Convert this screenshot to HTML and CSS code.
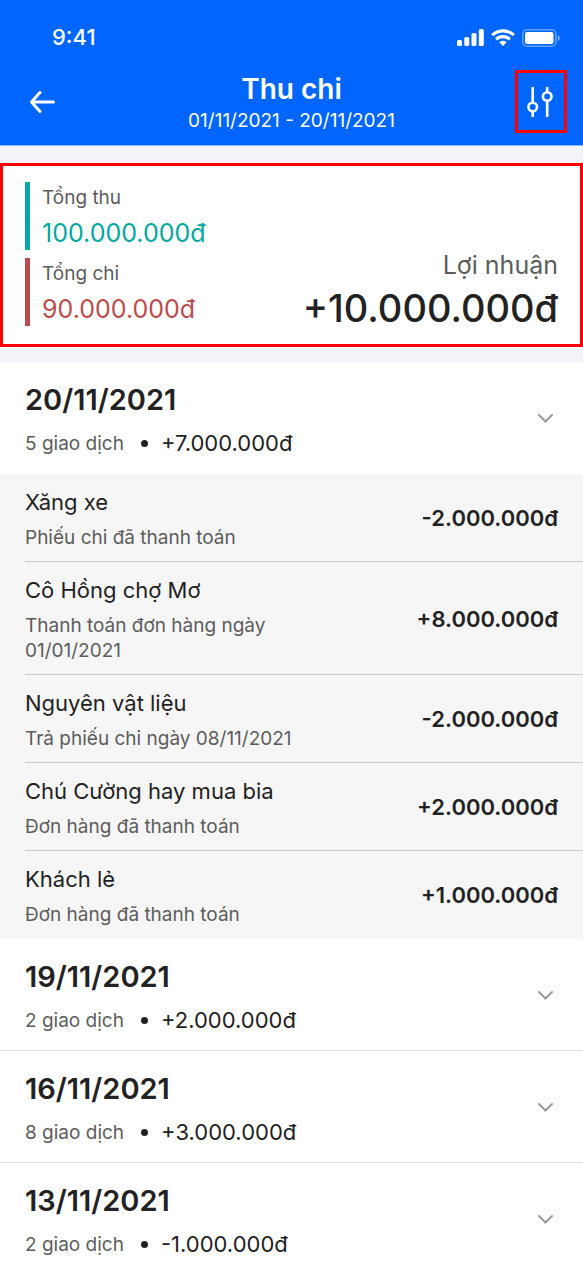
FILE: index.html
```html
<!DOCTYPE html>
<html lang="vi">
<head>
<meta charset="utf-8">
<meta name="viewport" content="width=device-width, initial-scale=1">
<title>Thu chi</title>
<link rel="stylesheet" href="styles.css">
</head>
<body>
<header class="header">
  <div class="status">
    <span class="clock">9:41</span>
    <div class="status-icons">
      <svg width="27" height="17" viewBox="0 0 27 17" fill="#fff" aria-hidden="true"><rect y="11" width="5" height="6" rx="1.5"/><rect x="7.300" y="8" width="5" height="9" rx="1.5"/><rect x="14.500" y="4" width="5" height="13" rx="1.5"/><rect x="21.800" y="0" width="5" height="17" rx="1.5"/></svg>
      <svg width="24" height="17" viewBox="0 0 24 17" aria-hidden="true"><g fill="none" stroke="#fff" stroke-width="3.200"><path d="M1.200 6.200a15.600 15.600 0 0 1 21.600 0"/><path d="M5.200 10.300a9.800 9.800 0 0 1 13.600 0"/></g><path fill="#fff" d="M12 17l-3.700-3.700a5.400 5.400 0 0 1 7.400 0z"/></svg>
      <svg width="38" height="18" viewBox="0 0 38 18" aria-hidden="true"><rect x=".8" y=".8" width="33" height="16.400" rx="4" fill="none" stroke="#fff" stroke-opacity=".4" stroke-width="1.500"/><rect x="3" y="3" width="28.500" height="12" rx="2.200" fill="#fff"/><path d="M35.800 6v6.200a3.400 3.400 0 0 0 0-6.200z" fill="#fff" fill-opacity=".5"/></svg>
    </div>
  </div>
  <div class="nav">
    <button class="icon-button" type="button" aria-label="Quay lại"><svg width="26" height="24" viewBox="0 0 26 24" fill="none" stroke="#fff" stroke-width="3" stroke-linecap="round" stroke-linejoin="round" aria-hidden="true"><path d="M24.500 12H3M11 2.500L2.500 12l8.500 9.500"/></svg></button>
    <div class="nav-title">
      <h1 class="title">Thu chi</h1>
      <p class="range">01/11/2021 - 20/11/2021</p>
    </div>
    <button class="icon-button filter" type="button" aria-label="Bộ lọc"><svg width="28" height="30" viewBox="0 0 28 30" fill="none" stroke="#fff" stroke-width="2.600" aria-hidden="true"><path d="M5.700 0v15.500M5.700 24.500V30M20.200 0v5M20.200 14v16"/><circle cx="5.700" cy="20" r="4.300"/><circle cx="20.200" cy="9.500" r="4.300"/></svg></button>
  </div>
</header>
<main>
  <section class="summary">
    <div class="totals">
      <div class="total income"><span class="label">Tổng thu</span><span class="value">100.000.000đ</span></div>
      <div class="total expense"><span class="label">Tổng chi</span><span class="value">90.000.000đ</span></div>
    </div>
    <div class="profit"><span class="profit-label">Lợi nhuận</span><span class="profit-value">+10.000.000đ</span></div>
  </section>
  <section class="days">
    <button class="day open" type="button" aria-expanded="true">
      <span class="day-text"><span class="date">20/11/2021</span><span class="meta"><span class="count">5 giao dịch</span><span class="dot"></span><span>+7.000.000đ</span></span></span>
      <svg class="chevron" width="17" height="10" viewBox="0 0 17 10" aria-hidden="true"><path d="M2 2l6.500 6.500L15 2"/></svg>
    </button>
    <ul class="items">
      <li class="item"><div class="item-text"><span class="name">Xăng xe</span><span class="note">Phiếu chi đã thanh toán</span></div><span class="amount">-2.000.000đ</span></li>
      <li class="item"><div class="item-text"><span class="name">Cô Hồng chợ Mơ</span><span class="note">Thanh toán đơn hàng ngày 01/01/2021</span></div><span class="amount">+8.000.000đ</span></li>
      <li class="item"><div class="item-text"><span class="name">Nguyên vật liệu</span><span class="note">Trả phiếu chi ngày 08/11/2021</span></div><span class="amount">-2.000.000đ</span></li>
      <li class="item"><div class="item-text"><span class="name">Chú Cường hay mua bia</span><span class="note">Đơn hàng đã thanh toán</span></div><span class="amount">+2.000.000đ</span></li>
      <li class="item"><div class="item-text"><span class="name">Khách lẻ</span><span class="note">Đơn hàng đã thanh toán</span></div><span class="amount">+1.000.000đ</span></li>
    </ul>
    <button class="day" type="button" aria-expanded="false">
      <span class="day-text"><span class="date">19/11/2021</span><span class="meta"><span class="count">2 giao dịch</span><span class="dot"></span><span>+2.000.000đ</span></span></span>
      <svg class="chevron" width="17" height="10" viewBox="0 0 17 10" aria-hidden="true"><path d="M2 2l6.500 6.500L15 2"/></svg>
    </button>
    <button class="day" type="button" aria-expanded="false">
      <span class="day-text"><span class="date">16/11/2021</span><span class="meta"><span class="count">8 giao dịch</span><span class="dot"></span><span>+3.000.000đ</span></span></span>
      <svg class="chevron" width="17" height="10" viewBox="0 0 17 10" aria-hidden="true"><path d="M2 2l6.500 6.500L15 2"/></svg>
    </button>
    <button class="day last" type="button" aria-expanded="false">
      <span class="day-text"><span class="date">13/11/2021</span><span class="meta"><span class="count">2 giao dịch</span><span class="dot"></span><span>-1.000.000đ</span></span></span>
      <svg class="chevron" width="17" height="10" viewBox="0 0 17 10" aria-hidden="true"><path d="M2 2l6.500 6.500L15 2"/></svg>
    </button>
  </section>
</main>
</body>
</html>
```
FILE: styles.css
```css
* { box-sizing: border-box; }
body { margin: 0; background: #f3f3fa; color: #222; font-family: Inter, "Noto Sans", sans-serif; font-size: 22px; line-height: 31px; }
h1, p, ul { margin: 0; padding: 0; }
button { font: inherit; color: inherit; border: 0; background: none; padding: 0; cursor: pointer; }
svg { display: block; flex: none; }

.header { background: #06f; color: #fff; padding: 22px 16px 11px; border-bottom: 1px solid #8fb8f8; }
.status { display: flex; justify-content: space-between; align-items: center; padding: 0 7px 0 36px; }
.clock { font-size: 22px; font-weight: 500; }
.status-icons { display: flex; align-items: center; gap: 7px; }
.nav { display: flex; align-items: flex-start; justify-content: space-between; padding-top: 17px; }
.icon-button { width: 52px; height: 63px; display: flex; align-items: center; justify-content: center; }
.filter { border: 3px solid #f00; }
.nav-title { text-align: center; }
.title { font-size: 28px; line-height: 38px; font-weight: 600; }
.range { font-size: 19px; line-height: 26px; }

.summary { display: flex; justify-content: space-between; align-items: flex-end; margin: 17px 0 15px; padding: 16px 22px 18px; border: 3px solid #f00; background: #fff; }
.totals { display: flex; flex-direction: column; gap: 8px; }
.total { display: flex; flex-direction: column; gap: 3px; padding-left: 12px; border-left: 5px solid; }
.income { color: #00a8a0; }
.expense { color: #bc4c4c; }
.label { font-size: 19px; line-height: 31px; color: #5c5c5c; }
.value { font-size: 25px; line-height: 34px; }
.profit { display: flex; flex-direction: column; gap: 7px; text-align: right; }
.profit-label { font-size: 25px; line-height: 36px; color: #5c5c5c; }
.profit-value { font-size: 38px; line-height: 36px; font-weight: 500; }

.day { display: flex; width: 100%; align-items: center; justify-content: space-between; padding: 19px 29px 14px 25px; background: #fff; border-bottom: 1px solid #dcdcdc; text-align: left; }
.open { border-bottom-color: #fff; }
.last { padding-bottom: 3px; border-bottom: 0; }
.day-text { display: flex; flex-direction: column; gap: 10px; }
.date { font-size: 29px; line-height: 37px; font-weight: 600; }
.meta { display: flex; align-items: center; }
.count { font-size: 19px; color: #5c5c5c; }
.dot { width: 7px; height: 7px; margin: 0 13px 0 17px; border-radius: 50%; background: #222; }
.chevron { margin-bottom: 5px; fill: none; stroke: #999; stroke-width: 2; stroke-linecap: round; }

.items { list-style: none; padding-left: 25px; background: #f6f6f6; }
.item { display: flex; align-items: center; justify-content: space-between; gap: 24px; padding: 13px 25px 11px 0; border-bottom: 1px solid #c8c8c8; }
.item:last-child { border-bottom-color: transparent; }
.item-text { display: flex; flex-direction: column; gap: 7px; max-width: 290px; }
.note { font-size: 19px; line-height: 25px; color: #5c5c5c; }
.amount { font-weight: 600; }
```
